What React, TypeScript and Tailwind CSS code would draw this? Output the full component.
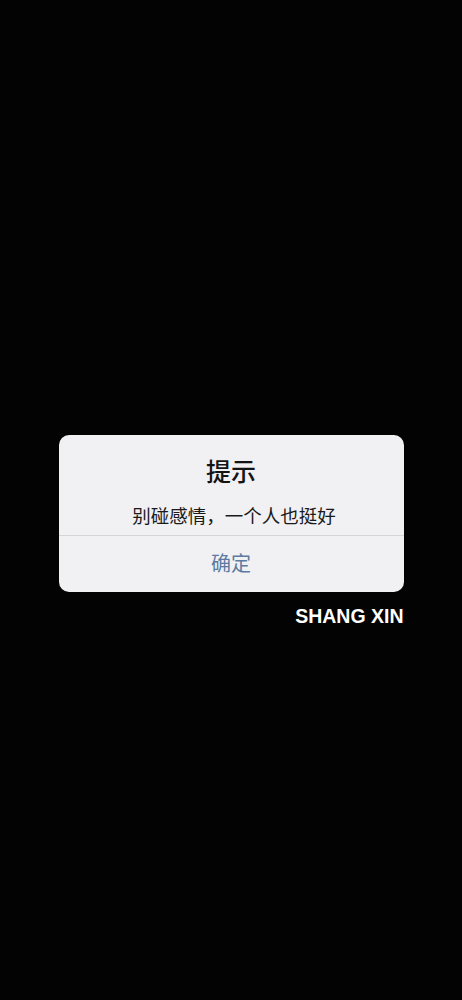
export default function App() {
  return (
    <div
      className="w-[462px] h-[1000px] bg-[#030303] pt-[435px] flex flex-col items-center"
      style={{ fontFamily: '"Noto Sans", "Noto Sans CJK SC", sans-serif' }}
    >
      <div className="w-[345px] flex flex-col">
        <div className="w-full bg-[#f1f1f3] rounded-[10px] flex flex-col items-center">
          <div className="pt-[22px] text-[25px] leading-[28px] text-[#141414] font-medium">提示</div>
          <div className="mt-[19px] pb-[7px] pl-[6px] text-[18.5px] leading-[24px] text-[#1a1a1a]">
            别碰感情，一个人也挺好
          </div>
          <div className="w-full h-px bg-[#d6d6da]" />
          <div className="h-[56px] flex items-center justify-center text-[20px] text-[#5c7aa2]">确定</div>
        </div>
        <div
          className="self-end mt-[13px] text-[19.5px] leading-[22px] font-bold text-white"
          style={{ fontFamily: '"Liberation Sans", Arial, sans-serif' }}
        >
          SHANG XIN
        </div>
      </div>
    </div>
  );
}
